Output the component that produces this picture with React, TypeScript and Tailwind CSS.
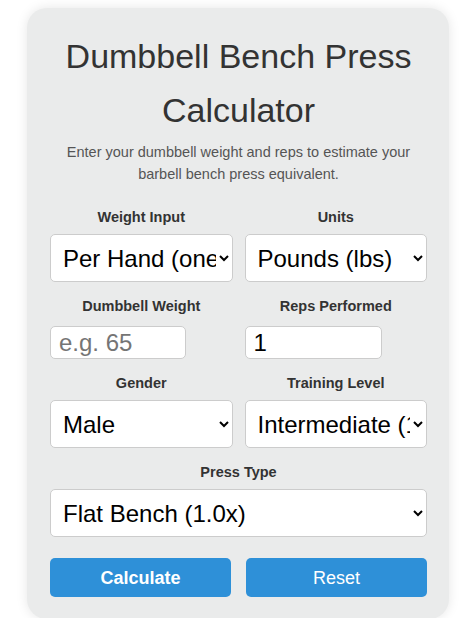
import React from "react";

const font = { fontFamily: '"Liberation Sans", Arial, sans-serif' };

function Label({ children, mb }: { children: React.ReactNode; mb: string }) {
  return (
    <label className={`block text-center text-[14.5px] font-bold leading-[18px] text-[#333] ${mb}`}>
      {children}
    </label>
  );
}

function Select({ options }: { options: string[] }) {
  return (
    <select className="block h-[48px] w-full rounded-[5px] border border-[#ccc] bg-white pl-2 text-[24px] text-black outline-none">
      {options.map((o) => (
        <option key={o}>{o}</option>
      ))}
    </select>
  );
}

export default function App() {
  return (
    <div className="min-h-[618px] bg-white pt-2" style={font}>
      <div className="ml-[27px] w-[422px] rounded-[20px] bg-[#eaebeb] pl-[23px] pr-[22px] pt-[21px] pb-[22px] shadow-[0_0_12px_rgba(0,0,0,0.1)]">
        {/* header */}
        <h1 className="text-center text-[34px] leading-[54px] font-normal text-[#333]">
          Dumbbell Bench Press Calculator
        </h1>
        <p className="mt-[4px] text-center text-[14.5px] leading-[22px] text-[#555]">
          Enter your dumbbell weight and reps to estimate your barbell bench press equivalent.
        </p>

        {/* row 1 */}
        <div className="mt-[23px] grid grid-cols-2 gap-x-3">
          <div>
            <Label mb="mb-2">Weight Input</Label>
            <Select options={["Per Hand (one dumbbell)", "Total (both dumbbells)"]} />
          </div>
          <div>
            <Label mb="mb-2">Units</Label>
            <Select options={["Pounds (lbs)", "Kilograms (kg)"]} />
          </div>
        </div>

        {/* row 2 */}
        <div className="mt-[15px] grid grid-cols-2 gap-x-3">
          <div>
            <Label mb="mb-[11px]">Dumbbell Weight</Label>
            <input
              type="number"
              placeholder="e.g. 65"
              className="block h-[33px] w-[136px] rounded-[5px] border border-[#ccc] bg-white px-2 text-[24px] text-black outline-none placeholder:text-[#757575]"
            />
          </div>
          <div>
            <Label mb="mb-[11px]">Reps Performed</Label>
            <input
              type="number"
              defaultValue={1}
              className="block h-[33px] w-[137px] rounded-[5px] border border-[#ccc] bg-white px-2 text-[24px] text-black outline-none"
            />
          </div>
        </div>

        {/* row 3 */}
        <div className="mt-[15px] grid grid-cols-2 gap-x-3">
          <div>
            <Label mb="mb-2">Gender</Label>
            <Select options={["Male", "Female"]} />
          </div>
          <div>
            <Label mb="mb-2">Training Level</Label>
            <Select options={["Intermediate (1-3 years)", "Beginner (<1 year)", "Advanced (3+ years)"]} />
          </div>
        </div>

        {/* press type */}
        <div className="mt-[15px]">
          <Label mb="mb-2">Press Type</Label>
          <Select options={["Flat Bench (1.0x)", "Incline Bench", "Decline Bench"]} />
        </div>

        {/* buttons */}
        <div className="mt-[21px] grid grid-cols-2 gap-x-[15px]">
          <button className="h-[39px] rounded-[5px] bg-[#2e90d8] pt-[2px] text-[18px] font-bold text-white">
            Calculate
          </button>
          <button className="h-[39px] rounded-[5px] bg-[#2e90d8] pt-[2px] text-[18px] text-white">Reset</button>
        </div>
      </div>
    </div>
  );
}
